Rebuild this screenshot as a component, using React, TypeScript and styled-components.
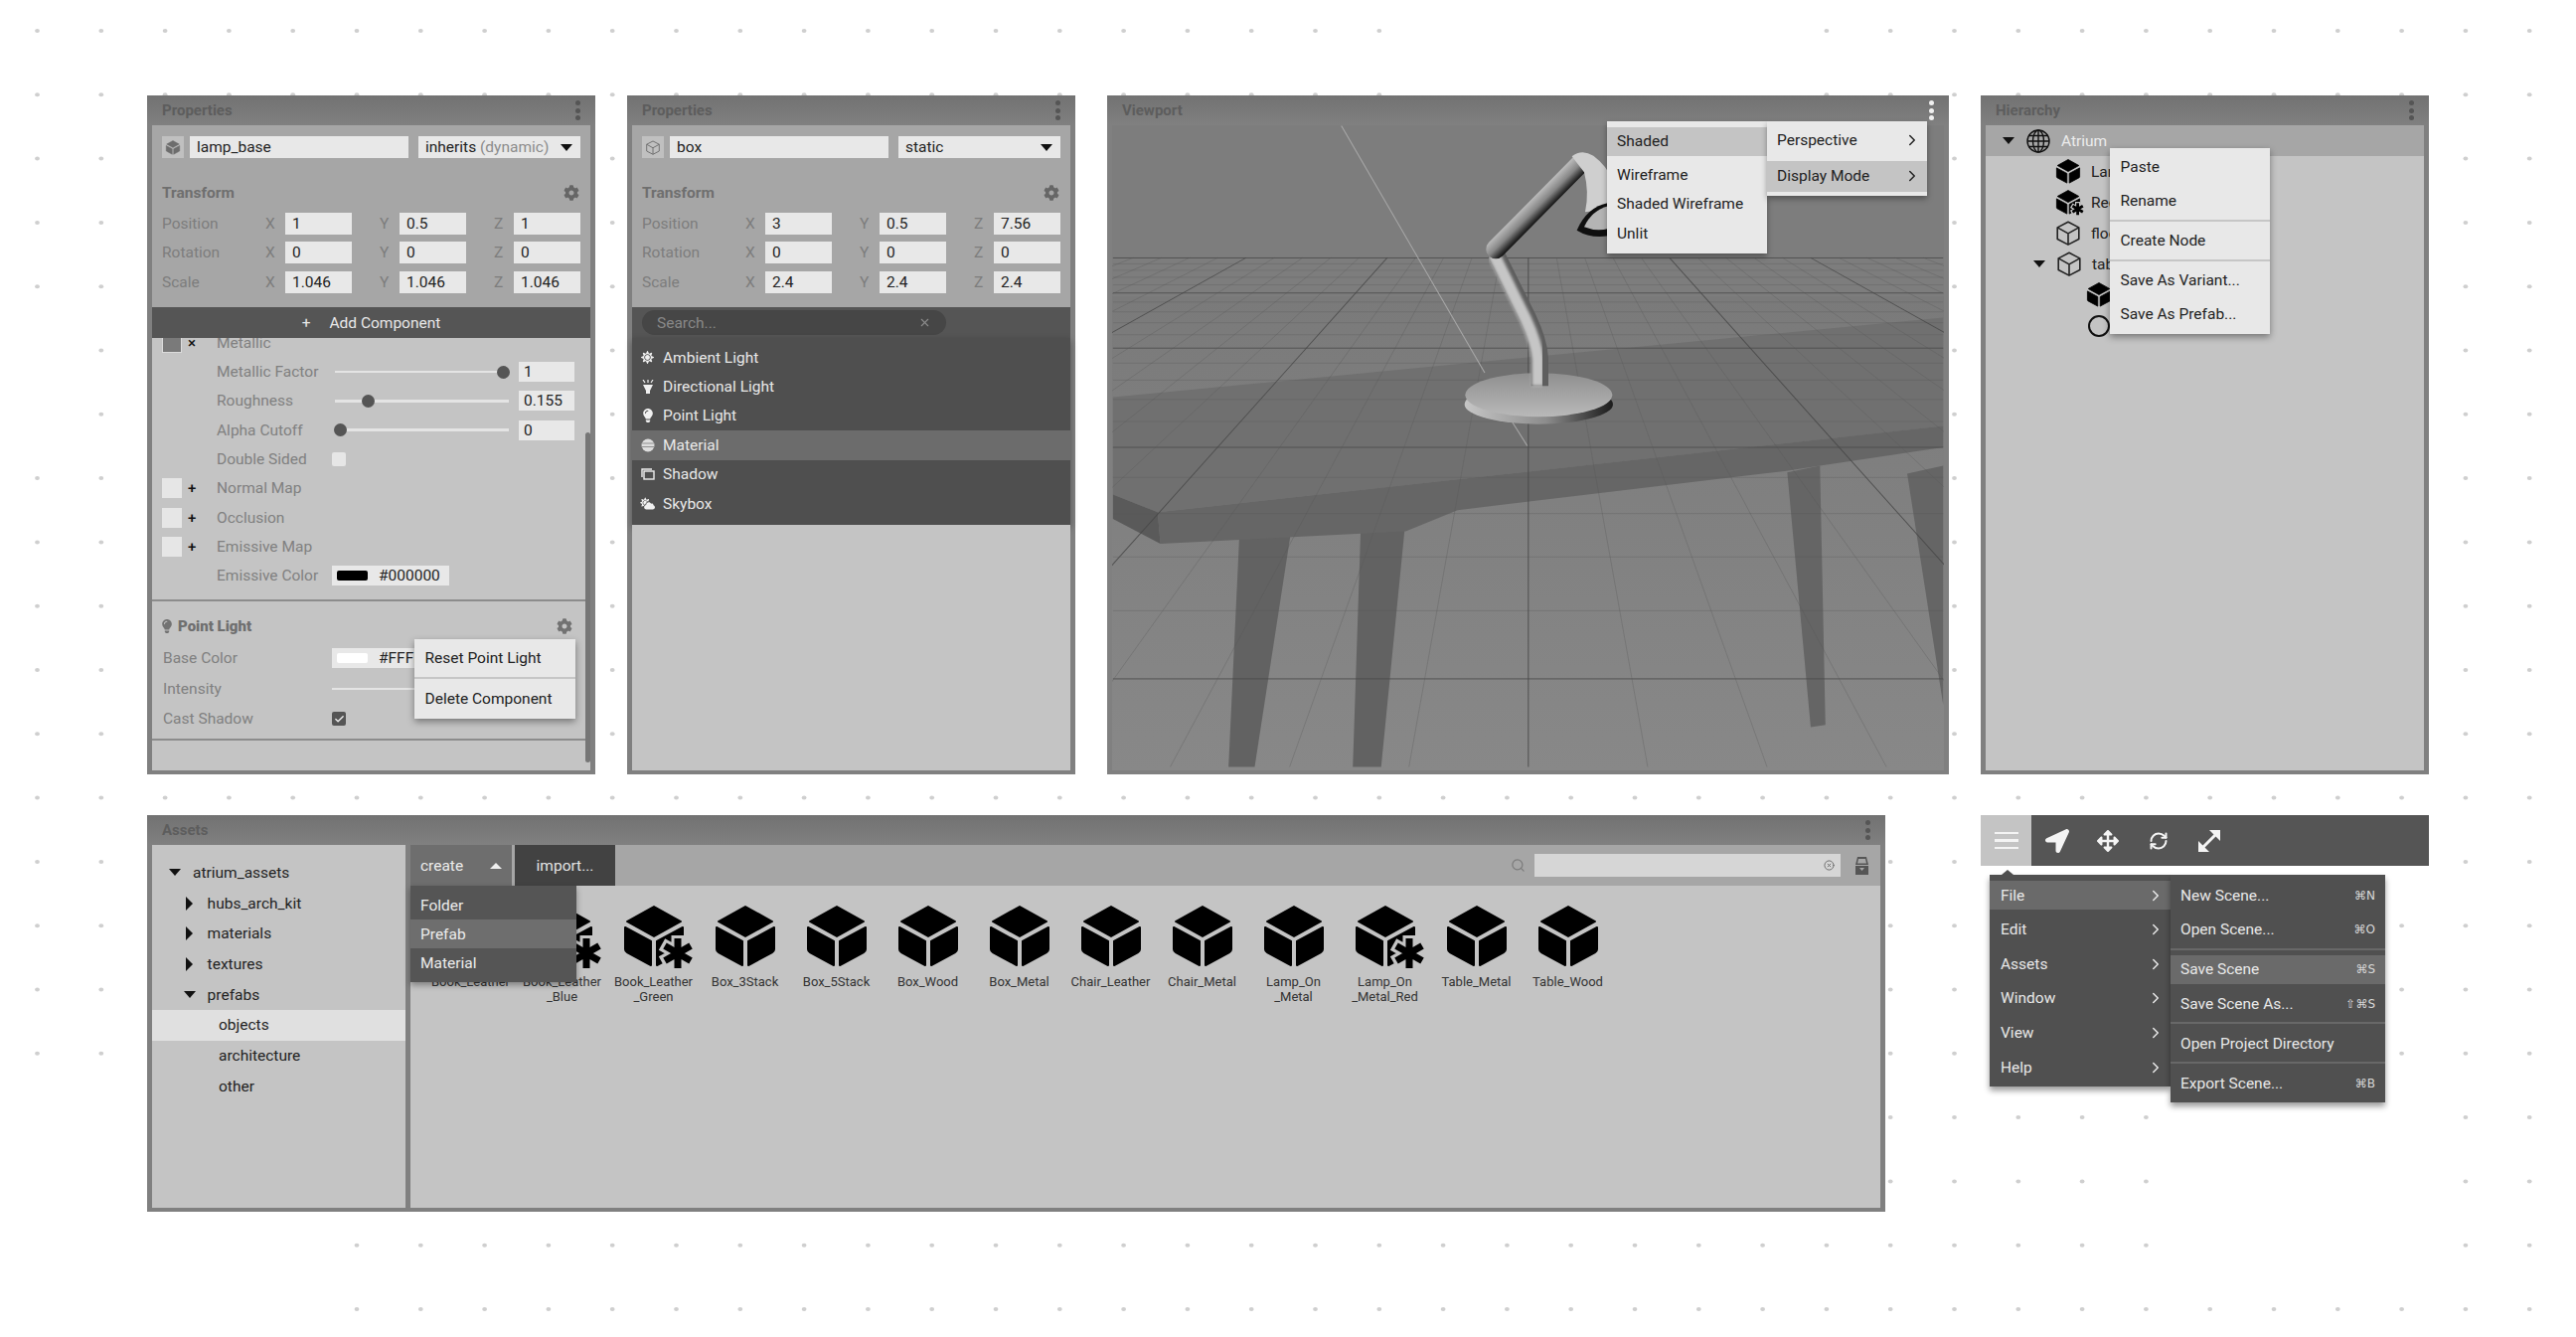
import React from "react";
import styled, { createGlobalStyle } from "styled-components";
import { Check, ChevronRight, RefreshCw, Search, X, XCircle } from "lucide-react";
import { FaArrowsAlt, FaCloudSun, FaCog, FaLightbulb, FaLocationArrow, FaSun } from "react-icons/fa";

const GlobalStyle = createGlobalStyle`
  html, body {
    margin: 0;
    padding: 0;
    background: #fff;
    font-family: Roboto, "Liberation Sans", sans-serif;
  }
  * { box-sizing: border-box; }
`;

const Page = styled.div`
  position: relative;
  width: 2592px;
  height: 1345px;
  overflow: hidden;
  background: #fff;
  padding: 96px 0 0 148px;
`;

const DotLayer = styled.svg`
  position: absolute;
  left: 0;
  top: 0;
`;

const TopRow = styled.div`
  position: relative;
  display: grid;
  grid-template-columns: 451px 451px 847px 451px;
  column-gap: 32px;
  height: 683px;
`;

const BottomRow = styled.div`
  position: relative;
  display: flex;
  gap: 96px;
  margin-top: 41px;
  align-items: flex-start;
`;

const Panel = styled.section<{ $w?: number; $h?: number }>`
  position: relative;
  display: flex;
  flex-direction: column;
  background: #808080;
  padding: 0 5px 4px;
  width: ${(p) => (p.$w ? `${p.$w}px` : "auto")};
  height: ${(p) => (p.$h ? `${p.$h}px` : "auto")};
`;

const PanelHeader = styled.header`
  display: flex;
  align-items: center;
  justify-content: space-between;
  flex: 0 0 30px;
  margin: 0 -5px;
  padding: 0 15.5px 0 15px;
  background: linear-gradient(#727272, #808080);
  font-size: 15px;
  font-weight: 700;
  color: #5d5d5d;
`;

const MoreDots = styled.div<{ $light?: boolean }>`
  display: flex;
  flex-direction: column;
  gap: 2.5px;
  i {
    display: block;
    width: 5px;
    height: 5px;
    border-radius: 50%;
    background: ${(p) => (p.$light ? "#f0f0f0" : "#555")};
  }
`;

const Body = styled.div`
  flex: 1;
  min-height: 0;
  background: #c4c4c4;
  overflow: hidden;
  position: relative;
`;

const TopSection = styled.div`
  height: 183px;
  padding: 11px 10px 0;
  background: #a6a6a6;
`;

const NameRow = styled.div`
  display: flex;
  height: 22px;
`;

const IconBox = styled.div`
  flex: 0 0 22px;
  margin-right: 6px;
  display: flex;
  align-items: center;
  justify-content: center;
  background: #c0c0c0;
  color: #6d6d6d;
`;

const Field = styled.div<{ $w?: number; $h?: number }>`
  display: flex;
  align-items: center;
  width: ${(p) => (p.$w ? `${p.$w}px` : "100%")};
  height: ${(p) => p.$h || 22}px;
  padding-left: 7px;
  background: #e8e8e8;
  font-size: 15.5px;
  color: #222;
  white-space: nowrap;
  flex: none;
`;

const SelectField = styled(Field)`
  margin-left: 10px;
  justify-content: space-between;
  padding-right: 8px;
  span em {
    font-style: normal;
    color: #8c8c8c;
  }
`;

const Caret = styled.i<{ $dir: "down" | "right" | "up"; $color?: string }>`
  display: block;
  width: 0;
  height: 0;
  border-style: solid;
  border-color: transparent;
  ${(p) =>
    p.$dir === "down"
      ? `border-width: 7px 6px 0; border-top-color: ${p.$color || "#111"};`
      : p.$dir === "up"
      ? `border-width: 0 6px 6px; border-bottom-color: ${p.$color || "#111"};`
      : `border-width: 7px 0 7px 7px; border-left-color: ${p.$color || "#111"};`}
`;

const SectionTitle = styled.div`
  display: flex;
  align-items: center;
  justify-content: space-between;
  height: 30px;
  margin-top: 19.5px;
  margin-bottom: 5.5px;
  font-size: 15.5px;
  font-weight: 700;
  color: #6f6f6f;
`;

const GearMark = styled.span<{ $light?: boolean }>`
  display: flex;
  margin-right: 1px;
  color: ${(p) => (p.$light ? "#f2f2f2" : "#666")};
`;

const TransformRow = styled.div`
  display: flex;
  align-items: center;
  height: 22px;
  margin-bottom: 7.33px;
`;

const RowLabel = styled.div`
  flex: 0 0 104px;
  font-size: 15.5px;
  color: #7d7d7d;
`;

const AxisCell = styled.div`
  display: flex;
  align-items: center;
  width: 86.67px;
  margin-right: 28.33px;
  &:last-child {
    margin-right: 0;
  }
`;

const AxisLetter = styled.span`
  flex: 0 0 20px;
  font-size: 15.5px;
  color: #7d7d7d;
`;

const AddBar = styled.div`
  display: flex;
  align-items: center;
  justify-content: center;
  gap: 19px;
  height: 31px;
  background: #555;
  color: #e8e8e8;
  font-size: 15.5px;
`;

const ScrollArea = styled.div`
  height: 435px;
  overflow: hidden;
`;

const MaterialRow = styled.div<{ $first?: boolean }>`
  display: grid;
  grid-template-columns: 65px 116px 1fr;
  align-items: center;
  height: 29.33px;
  margin-top: ${(p) => (p.$first ? "-10px" : "0")};
  font-size: 15.5px;
  color: #808080;
`;

const SwatchSlot = styled.div`
  display: flex;
  align-items: center;
  gap: 6px;
  padding-left: 10px;
  color: #111;
  font-size: 15px;
  font-weight: 500;
`;

const MapSwatch = styled.div<{ $dark?: boolean }>`
  width: 20px;
  height: 20px;
  background: ${(p) => (p.$dark ? "#7a7a7a" : "#e6e6e6")};
  border: ${(p) => (p.$dark ? "1px solid #dcdcdc" : "none")};
`;

const SliderWrap = styled.div`
  display: flex;
  align-items: center;
  margin-left: 3px;
`;

const Track = styled.div`
  position: relative;
  width: 175px;
  height: 2.5px;
  background: #e4e4e4;
`;

const Thumb = styled.i<{ $pos: number }>`
  position: absolute;
  left: ${(p) => p.$pos}%;
  top: -5px;
  width: 13px;
  height: 13px;
  margin-left: -6.5px;
  border-radius: 50%;
  background: #555;
`;

const ValueField = styled(Field)`
  margin-left: 10px;
  padding-left: 5px;
`;

const Checkbox = styled.div<{ $on?: boolean }>`
  display: flex;
  align-items: center;
  justify-content: center;
  width: 14px;
  height: 14px;
  border-radius: 2px;
  background: ${(p) => (p.$on ? "#555" : "#e6e6e6")};
  color: #eee;
`;

const ColorField = styled.div`
  display: flex;
  align-items: center;
  gap: 11px;
  width: 118px;
  height: 20px;
  padding-left: 5px;
  background: #e8e8e8;
  font-size: 15.5px;
  color: #222;
`;

const ColorChip = styled.i<{ $c: string }>`
  width: 31px;
  height: 10px;
  border-radius: 2px;
  background: ${(p) => p.$c};
`;

const LightSection = styled.div`
  margin-top: 9.5px;
  border-top: 2px solid #8c8c8c;
  border-bottom: 2px solid #8c8c8c;
  padding: 8px 0 4px;
`;

const LightTitle = styled.div`
  display: flex;
  align-items: center;
  height: 33.75px;
  padding: 0 17px 0 8px;
  gap: 4px;
  font-size: 15px;
  font-weight: 700;
  color: #6f6f6f;
  svg {
    color: #727272;
  }
  b {
    flex: 1;
  }
`;

const LightRow = styled.div`
  display: grid;
  grid-template-columns: 170px 1fr;
  align-items: center;
  height: 30.5px;
  padding-left: 11px;
  font-size: 15.5px;
  color: #808080;
`;

const WideTrack = styled.div`
  width: 180px;
  height: 2.5px;
  background: #e4e4e4;
`;

const ScrollThumb = styled.div`
  position: absolute;
  left: 441px;
  top: 339px;
  width: 5px;
  height: 332px;
  border-radius: 3px;
  background: #767676;
`;

const PopMenu = styled.div<{ $l: number; $t: number; $w: number; $pt?: number; $pb?: number }>`
  position: absolute;
  left: ${(p) => p.$l}px;
  top: ${(p) => p.$t}px;
  width: ${(p) => p.$w}px;
  padding: ${(p) => p.$pt || 0}px 0 ${(p) => p.$pb || 0}px;
  background: #e8e8e8;
  box-shadow: 0 3px 7px rgba(0, 0, 0, 0.4);
  font-size: 15.5px;
  color: #222;
  z-index: 3;
`;

const PopItem = styled.div<{ $h?: number }>`
  display: flex;
  align-items: center;
  height: ${(p) => p.$h || 34}px;
  padding-left: 10.5px;
  white-space: nowrap;
`;

const PopRule = styled.hr<{ $gap?: number }>`
  margin: ${(p) => p.$gap ?? 2}px 0;
  border: 0;
  height: 2px;
  background: #c6c6c6;
`;

const SearchBar = styled.div`
  display: flex;
  align-items: center;
  height: 31px;
  padding: 0 0 0 10px;
  background: #555;
`;

const SearchPill = styled.div`
  display: flex;
  align-items: center;
  justify-content: space-between;
  width: 306px;
  height: 25px;
  padding: 0 15px;
  border-radius: 13px;
  background: #464646;
  color: #888;
  font-size: 15.5px;
`;

const ComponentList = styled.div`
  height: 188px;
  padding-top: 5px;
  background: #4f4f4f;
  box-shadow: 0 3px 7px rgba(0, 0, 0, 0.35);
  position: relative;
`;

const ComponentRow = styled.div<{ $active?: boolean }>`
  display: flex;
  align-items: center;
  height: 29.4px;
  padding-left: 8px;
  gap: 8px;
  background: ${(p) => (p.$active ? "#6c6c6c" : "transparent")};
  color: #e8e8e8;
  font-size: 15.5px;
`;

const ComponentIcon = styled.span`
  display: flex;
  justify-content: center;
  width: 15px;
`;

const Scene = styled.svg`
  display: block;
  width: 100%;
  height: 100%;
`;

const MenuColumn = styled.div<{ $w: number; $h: number }>`
  width: ${(p) => p.$w}px;
  height: ${(p) => p.$h}px;
  padding-top: 5.5px;
  background: #e8e8e8;
  box-shadow: 0 3px 6px rgba(0, 0, 0, 0.35);
`;

const ViewMenu = styled.div`
  position: absolute;
  left: 503px;
  top: 26px;
  display: flex;
  align-items: flex-start;
  z-index: 3;
`;

const ViewItem = styled.div<{ $active?: boolean; $h?: number; $mt?: number; $mb?: number }>`
  display: flex;
  align-items: center;
  justify-content: space-between;
  height: ${(p) => p.$h || 29.5}px;
  margin-top: ${(p) => p.$mt || 0}px;
  margin-bottom: ${(p) => p.$mb || 0}px;
  padding: 0 6px 0 10px;
  background: ${(p) => (p.$active ? "#c4c4c4" : "transparent")};
  font-size: 15.5px;
  color: #222;
`;

const TreeBand = styled.div<{ $pad: number; $band?: boolean; $h?: number; $gap?: number }>`
  display: flex;
  align-items: center;
  height: ${(p) => p.$h || 31}px;
  padding-left: ${(p) => p.$pad}px;
  gap: ${(p) => p.$gap || 11}px;
  background: ${(p) => (p.$band ? "#a6a6a6" : "transparent")};
  color: ${(p) => (p.$band ? "#ececec" : "#222")};
  font-size: 15.5px;
  white-space: nowrap;
`;

const CaretSlot = styled.span`
  display: flex;
  align-items: center;
  justify-content: center;
  flex: 0 0 24px;
  margin-right: -5px;
`;

const RingIcon = styled.i`
  width: 22px;
  height: 22px;
  margin-left: 1px;
  border: 2px solid #111;
  border-radius: 50%;
`;

const AssetsBody = styled.div`
  flex: 1;
  display: flex;
  gap: 5px;
  min-height: 0;
`;

const TreePane = styled.div`
  flex: 0 0 255px;
  padding-top: 12.6px;
  background: #c4c4c4;
`;

const AssetRow = styled.div<{ $pad: number; $active?: boolean }>`
  display: flex;
  align-items: center;
  gap: 6px;
  height: 30.7px;
  padding-left: ${(p) => p.$pad}px;
  background: ${(p) => (p.$active ? "#e0e0e0" : "transparent")};
  font-size: 15.5px;
  color: #222;
`;

const RowName = styled.span`
  margin-left: 5px;
`;

const MainPane = styled.div`
  position: relative;
  flex: 1;
  background: #c4c4c4;
`;

const AssetToolbar = styled.div`
  display: flex;
  align-items: center;
  height: 41px;
  background: #a6a6a6;
`;

const CreateButton = styled.div`
  display: flex;
  align-items: center;
  justify-content: space-between;
  width: 102px;
  height: 100%;
  padding: 0 10px;
  background: #6e6e6e;
  color: #ececec;
  font-size: 15.5px;
`;

const ImportButton = styled.div`
  display: flex;
  align-items: center;
  justify-content: center;
  width: 101px;
  height: 100%;
  margin-left: 3px;
  background: #424242;
  color: #e4e4e4;
  font-size: 15.5px;
`;

const SearchGroup = styled.div`
  display: flex;
  align-items: center;
  margin-left: auto;
  padding-right: 11px;
  color: #7c7c7c;
`;

const AssetSearch = styled.div`
  display: flex;
  align-items: center;
  justify-content: flex-end;
  width: 308px;
  height: 23px;
  margin: 0 14px 0 9px;
  padding-right: 6px;
  background: #d6d6d6;
  color: #666;
`;

const AssetGrid = styled.div`
  display: flex;
  padding: 20px 0 0 14.5px;
`;

const AssetItem = styled.div`
  display: flex;
  flex-direction: column;
  align-items: center;
  width: 92px;
`;

const AssetLabel = styled.div`
  margin-top: 7px;
  font-size: 13px;
  line-height: 15px;
  color: #333;
  text-align: center;
  white-space: pre-line;
`;

const CreateMenu = styled.div`
  position: absolute;
  left: 0;
  top: 41px;
  width: 167px;
  height: 97px;
  padding-top: 5px;
  background: #555;
  box-shadow: 0 3px 6px rgba(0, 0, 0, 0.35);
  z-index: 2;
`;

const CreateItem = styled.div<{ $active?: boolean }>`
  display: flex;
  align-items: center;
  height: 29px;
  padding-left: 10px;
  background: ${(p) => (p.$active ? "#6e6e6e" : "transparent")};
  color: #ececec;
  font-size: 15.5px;
`;

const ToolColumn = styled.div`
  position: relative;
  width: 451px;
`;

const ToolBar = styled.div`
  display: flex;
  height: 51px;
  background: #555;
`;

const ToolButton = styled.div<{ $active?: boolean }>`
  display: flex;
  align-items: center;
  justify-content: center;
  width: 51px;
  background: ${(p) => (p.$active ? "#c4c4c4" : "transparent")};
  color: #f4f4f4;
`;

const Burger = styled.div`
  display: flex;
  flex-direction: column;
  gap: 5px;
  i {
    display: block;
    width: 24px;
    height: 2.5px;
    background: #f4f4f4;
  }
`;

const MenuStack = styled.div`
  position: absolute;
  left: 9px;
  top: 60px;
  display: flex;
  align-items: flex-start;
  z-index: 2;
  &::before {
    content: "";
    position: absolute;
    left: 12px;
    top: -5px;
    border-style: solid;
    border-width: 0 6px 5px;
    border-color: transparent transparent #505050;
  }
`;

const DarkMenu = styled.div<{ $w: number }>`
  width: ${(p) => p.$w}px;
  padding: 6px 0 5px;
  background: #505050;
  box-shadow: 0 4px 6px rgba(0, 0, 0, 0.4);
  color: #e8e8e8;
  font-size: 15.5px;
`;

const DarkItem = styled.div<{ $active?: boolean; $gap?: number }>`
  display: flex;
  align-items: center;
  justify-content: space-between;
  height: 29px;
  margin-bottom: ${(p) => p.$gap ?? 5.67}px;
  padding: 0 6px 0 11px;
  background: ${(p) => (p.$active ? "#6a6a6a" : "transparent")};
  &:last-child {
    margin-bottom: 0;
  }
`;

const SubItem = styled(DarkItem)`
  padding: 0 10px;
`;

const Shortcut = styled.span`
  font-family: "DejaVu Sans", Roboto, sans-serif;
  font-size: 12px;
  color: #d8d8d8;
`;

const DarkRule = styled.hr`
  margin: 0 0 5px;
  border: 0;
  height: 2px;
  background: #686868;
`;

// cube glyph used all over the editor, solid or outlined, with optional "variant" star
const Cube = ({
  w = 60,
  h = 62,
  outline = false,
  star = false,
  fill = "#000",
}: {
  w?: number;
  h?: number;
  outline?: boolean;
  star?: boolean;
  fill?: string;
}) => (
  <svg width={w} height={h} viewBox="0 0 60 62" style={{ overflow: "visible", flex: "none" }}>
    {outline ? (
      <g fill="none" stroke="currentColor" strokeWidth={4} strokeLinejoin="round">
        <path d="M30 3 L57 17 V46 L30 60 L3 46 V17 Z" />
        <path d="M3 17 L30 32 L57 17 M30 32 V60" />
      </g>
    ) : (
      <g fill={fill} stroke={fill} strokeWidth={2} strokeLinejoin="round">
        <path d="M30 1 L57 16 L30 31 L3 16 Z" />
        <path d="M1 22 L27 36 V60 L3 47 Q1 46 1 44 Z" />
        <path d="M59 22 L33 36 V60 L57 47 Q59 46 59 44 Z" />
      </g>
    )}
    {star && (
      <g strokeLinecap="butt">
        <g stroke="#c4c4c4" strokeWidth={13}>
          <path d="M54 30 V66 M38 39 L70 57 M38 57 L70 39" />
        </g>
        <g stroke="#000" strokeWidth={7}>
          <path d="M54 33 V63 M41 40.5 L67 55.5 M41 55.5 L67 40.5" />
        </g>
      </g>
    )}
  </svg>
);

const Gear = ({ light }: { light?: boolean }) => (
  <GearMark $light={light}>
    <FaCog size={16} />
  </GearMark>
);

const GlobeIcon = () => (
  <svg width="24" height="24" viewBox="0 0 24 24" fill="none" stroke="#111" strokeWidth="1.4">
    <circle cx="12" cy="12" r="11" />
    <ellipse cx="12" cy="12" rx="5.5" ry="11" />
    <path d="M12 1 V23 M1 12 H23 M2.6 6.5 H21.4 M2.6 17.5 H21.4" />
  </svg>
);

const ArchiveIcon = () => (
  <svg width="15" height="20" viewBox="0 0 15 20" fill="#555">
    <path d="M3 1 H12 L14 9 H1 Z M4 3 L3 7.5 H12 L11 3 Z" fillRule="evenodd" />
    <path d="M1 10 H14 V19 H1 Z M5 12 L7.5 15 L10 12 Z" fillRule="evenodd" />
  </svg>
);

const ExpandIcon = () => (
  <svg width="26" height="26" viewBox="0 0 26 26" fill="none" stroke="#f4f4f4" strokeWidth="3">
    <path d="M4 22 L22 4" />
    <path d="M13 2 H24 V13 Z" fill="#f4f4f4" stroke="none" />
    <path d="M2 13 V24 H13 Z" fill="#f4f4f4" stroke="none" />
  </svg>
);

const DirectionalIcon = () => (
  <svg width="12" height="15" viewBox="0 0 12 15" fill="#f0f0f0">
    <path d="M1 5 H11 L8 11 V14 H4 V11 Z" />
    <path d="M1 0 L3 3 M6 0 V3 M11 0 L9 3" stroke="#f0f0f0" strokeWidth="1.2" />
  </svg>
);

const MaterialIcon = () => (
  <svg width="14" height="14" viewBox="0 0 14 14">
    <circle cx="7" cy="7" r="6.5" fill="#ddd" />
    <path d="M1 5 H13 M0.8 8.5 H13.2" stroke="#8f8f8f" strokeWidth="1" />
  </svg>
);

const ShadowIcon = () => (
  <svg width="14" height="12" viewBox="0 0 14 12" fill="none" stroke="#eee" strokeWidth="1.4">
    <path d="M1 9 V1 H11" />
    <rect x="3" y="3" width="10" height="8" />
  </svg>
);

const DOT_COLS = 40;
const DOT_ROWS = 21;

// the dot grid has a few holes in it, same ones as in the mockup
const dotVisible = (c: number, r: number) => {
  if (r <= 1 && c >= 22 && c <= 27) return false;
  if (c === 0 && (r === 5 || r === 6)) return false;
  if (r === 17 || r === 18) return c >= 29 && (c <= 33 || c >= 38);
  if (r === 19) return c >= 5 && (c <= 33 || c >= 38);
  if (r === 20) return c >= 5;
  return true;
};

const DotGrid = () => {
  const dots: React.ReactNode[] = [];
  for (let r = 0; r < DOT_ROWS; r++) {
    for (let c = 0; c < DOT_COLS; c++) {
      if (dotVisible(c, r)) {
        dots.push(<ellipse key={`${c}-${r}`} cx={37.5 + c * 64.3} cy={31 + r * 64.3} rx={2.4} ry={2} fill="#cfcfcf" />);
      }
    }
  }
  return (
    <DotLayer width="2592" height="1345">
      {dots}
    </DotLayer>
  );
};

const gridX = (a: number, y: number) => 780 + a * (y - 24);

const GridLines = () => {
  const lines: React.ReactNode[] = [];
  for (let n = 0; n <= 25; n++) {
    const y = 24 + 1 / (0.000255 + n * 0.000102);
    if (y > 1530) continue;
    const major = n % 5 === 0;
    lines.push(
      <line key={`h${n}`} x1="18" x2="1541" y1={y} y2={y} stroke={major ? "#484848" : "#565656"} strokeOpacity={major ? 0.9 : 0.55} strokeWidth={major ? 1.8 : 1.1} />
    );
  }
  for (let i = -60; i <= 60; i++) {
    const a = i * 0.1454;
    const major = i % 5 === 0;
    lines.push(
      <line key={`v${i}`} x1={gridX(a, 380)} y1="380" x2={gridX(a, 1530)} y2="1530" stroke={major ? "#484848" : "#565656"} strokeOpacity={major ? 0.85 : 0.5} strokeWidth={major ? 1.9 : 1.3} />
    );
  }
  return <g>{lines}</g>;
};

const Lamp = () => (
  <g transform="translate(1440 130) scale(0.3333)">
    <ellipse cx="325" cy="830" rx="224" ry="60" fill="url(#baseSide)" />
    <ellipse cx="325" cy="802" rx="222" ry="66" fill="url(#baseTop)" />
    <path d="M328 775 V690 Q325 640 292 570 L195 375" fill="none" stroke="#5e5e5e" strokeWidth="52" />
    <path d="M322 775 V692 Q318 645 286 575 L189 378" fill="none" stroke="#c6c6c6" strokeWidth="36" filter="url(#soft)" />
    <path d="M195 362 L452 102" fill="none" stroke="url(#armUp)" strokeWidth="58" strokeLinecap="round" />
    <path d="M425 82 Q455 58 490 80 Q530 110 545 150 V240 L465 250 Q478 190 462 130 Z" fill="#cfcfcf" />
    <path d="M535 222 Q470 235 440 305 Q480 330 535 322 Z" fill="#0f0f0f" />
    <path d="M535 232 Q485 245 462 295 Q500 310 535 300 Z" fill="#b4b4b4" />
  </g>
);

const ViewportScene = () => (
  <Scene viewBox="1119 126 837 649" preserveAspectRatio="none">
    <defs>
      <linearGradient id="ground" x1="0" y1="0" x2="0" y2="1">
        <stop offset="0" stopColor="#7a7a7a" />
        <stop offset="1" stopColor="#888" />
      </linearGradient>
      <linearGradient id="baseSide" x1="0" y1="0" x2="1" y2="0">
        <stop offset="0" stopColor="#c6c6c6" />
        <stop offset="0.55" stopColor="#8c8c8c" />
        <stop offset="0.9" stopColor="#333" />
        <stop offset="1" stopColor="#1c1c1c" />
      </linearGradient>
      <linearGradient id="baseTop" x1="0" y1="0" x2="0" y2="1">
        <stop offset="0" stopColor="#8f8f8f" />
        <stop offset="1" stopColor="#b9b9b9" />
      </linearGradient>
      <linearGradient id="armUp" gradientUnits="userSpaceOnUse" x1="304" y1="210" x2="346" y2="252">
        <stop offset="0" stopColor="#bcbcbc" />
        <stop offset="0.5" stopColor="#868686" />
        <stop offset="0.85" stopColor="#303030" />
        <stop offset="1" stopColor="#111" />
      </linearGradient>
      <filter id="soft">
        <feGaussianBlur stdDeviation="5" />
      </filter>
    </defs>
    <rect x="1119" y="126" width="837" height="649" fill="#7d7d7d" />
    <rect x="1119" y="298" width="837" height="477" fill="url(#ground)" />
    <g transform="translate(1110 90) scale(0.5485 0.4454)">
      <path d="M250 1005 L345 995 L278 1530 H230 Z" fill="#626262" />
      <path d="M473 975 L553 995 L510 1530 H458 Z" fill="#626262" />
      <path d="M1255 865 L1315 850 L1325 1435 L1298 1440 Z" fill="#656565" />
      <path d="M1475 868 L1541 850 V1390 Z" fill="#656565" />
      <path d="M18 695 L1541 515 V760 L100 955 L18 915 Z" fill="#707070" />
      <path d="M100 955 L1541 760 V808 L1315 850 L1250 862 L650 950 L555 998 L105 1026 Z" fill="#666" />
      <path d="M18 915 L100 955 L105 1026 L18 970 Z" fill="#5a5a5a" />
      <GridLines />
      <path d="M437 82 L700 640 M750 750 L778 805" stroke="#a6a6a6" strokeWidth="2" fill="none" />
    </g>
    <Lamp />
  </Scene>
);

const inspector = {
  first: { position: ["1", "0.5", "1"], rotation: ["0", "0", "0"], scale: ["1.046", "1.046", "1.046"] },
  second: { position: ["3", "0.5", "7.56"], rotation: ["0", "0", "0"], scale: ["2.4", "2.4", "2.4"] },
};

const Axis = ({ letter, value }: { letter: string; value: string }) => (
  <AxisCell>
    <AxisLetter>{letter}</AxisLetter>
    <Field $w={66.67}>{value}</Field>
  </AxisCell>
);

const TransformLine = ({ label, values }: { label: string; values: string[] }) => (
  <TransformRow>
    <RowLabel>{label}</RowLabel>
    <Axis letter="X" value={values[0]} />
    <Axis letter="Y" value={values[1]} />
    <Axis letter="Z" value={values[2]} />
  </TransformRow>
);

const Inspector = ({ name, mode, icon, data }: { name: string; mode: React.ReactNode; icon: React.ReactNode; data: typeof inspector.first }) => (
  <TopSection>
    <NameRow>
      <IconBox>{icon}</IconBox>
      <Field $w={220}>{name}</Field>
      <SelectField $w={163}>
        <span>{mode}</span>
        <Caret $dir="down" />
      </SelectField>
    </NameRow>
    <SectionTitle>
      Transform
      <Gear />
    </SectionTitle>
    <TransformLine label="Position" values={data.position} />
    <TransformLine label="Rotation" values={data.rotation} />
    <TransformLine label="Scale" values={data.scale} />
  </TopSection>
);

const Slider = ({ pos, value }: { pos: number; value: string }) => (
  <SliderWrap>
    <Track>
      <Thumb $pos={pos} />
    </Track>
    <ValueField $w={56} $h={20}>
      {value}
    </ValueField>
  </SliderWrap>
);

const MapRow = ({ label }: { label: string }) => (
  <MaterialRow>
    <SwatchSlot>
      <MapSwatch />+
    </SwatchSlot>
    <span>{label}</span>
  </MaterialRow>
);

const PanelTitle = ({ title, light }: { title: string; light?: boolean }) => (
  <PanelHeader>
    {title}
    <MoreDots $light={light}>
      <i />
      <i />
      <i />
    </MoreDots>
  </PanelHeader>
);

const components = [
  { label: "Ambient Light", icon: <FaSun size={13} color="#f0f0f0" /> },
  { label: "Directional Light", icon: <DirectionalIcon /> },
  { label: "Point Light", icon: <FaLightbulb size={14} color="#f0f0f0" /> },
  { label: "Material", icon: <MaterialIcon />, active: true },
  { label: "Shadow", icon: <ShadowIcon /> },
  { label: "Skybox", icon: <FaCloudSun size={15} color="#f0f0f0" /> },
];

const assets = [
  { label: "Book_Leather", star: true },
  { label: "Book_Leather\n_Blue", star: true },
  { label: "Book_Leather\n_Green", star: true },
  { label: "Box_3Stack" },
  { label: "Box_5Stack" },
  { label: "Box_Wood" },
  { label: "Box_Metal" },
  { label: "Chair_Leather" },
  { label: "Chair_Metal" },
  { label: "Lamp_On\n_Metal" },
  { label: "Lamp_On\n_Metal_Red", star: true },
  { label: "Table_Metal" },
  { label: "Table_Wood" },
];

const mainMenu = ["File", "Edit", "Assets", "Window", "View", "Help"];

export default function App() {
  return (
    <Page>
      <GlobalStyle />
      <DotGrid />
      <TopRow>
        <Panel>
          <PanelTitle title="Properties" />
          <Inspector
            name="lamp_base"
            mode={
              <>
                inherits <em>(dynamic)</em>
              </>
            }
            icon={<Cube w={14} h={15} fill="#6d6d6d" />}
            data={inspector.first}
          />
          <AddBar>
            <span>+</span>
            <span>Add Component</span>
          </AddBar>
          <Body>
            <ScrollArea>
              <MaterialRow $first>
                <SwatchSlot>
                  <MapSwatch $dark />×
                </SwatchSlot>
                <span>Metallic</span>
              </MaterialRow>
              <MaterialRow>
                <span />
                <span>Metallic Factor</span>
                <Slider pos={96.6} value="1" />
              </MaterialRow>
              <MaterialRow>
                <span />
                <span>Roughness</span>
                <Slider pos={18.9} value="0.155" />
              </MaterialRow>
              <MaterialRow>
                <span />
                <span>Alpha Cutoff</span>
                <Slider pos={3.4} value="0" />
              </MaterialRow>
              <MaterialRow>
                <span />
                <span>Double Sided</span>
                <Checkbox />
              </MaterialRow>
              <MapRow label="Normal Map" />
              <MapRow label="Occlusion" />
              <MapRow label="Emissive Map" />
              <MaterialRow>
                <span />
                <span>Emissive Color</span>
                <ColorField>
                  <ColorChip $c="#000" />
                  #000000
                </ColorField>
              </MaterialRow>
              <LightSection>
                <LightTitle>
                  <FaLightbulb size={14} />
                  <b>Point Light</b>
                  <Gear light />
                </LightTitle>
                <LightRow>
                  <span>Base Color</span>
                  <ColorField>
                    <ColorChip $c="#fff" />
                    #FFFFFF
                  </ColorField>
                </LightRow>
                <LightRow>
                  <span>Intensity</span>
                  <WideTrack />
                </LightRow>
                <LightRow>
                  <span>Cast Shadow</span>
                  <Checkbox $on>
                    <Check size={11} strokeWidth={3} />
                  </Checkbox>
                </LightRow>
              </LightSection>
            </ScrollArea>
          </Body>
          <ScrollThumb />
          <PopMenu $l={269} $t={547} $w={162}>
            <PopItem $h={38}>Reset Point Light</PopItem>
            <PopRule $gap={0} />
            <PopItem $h={40}>Delete Component</PopItem>
          </PopMenu>
        </Panel>

        <Panel>
          <PanelTitle title="Properties" />
          <Inspector name="box" mode="static" icon={<Cube w={14} h={15} outline />} data={inspector.second} />
          <SearchBar>
            <SearchPill>
              Search...
              <X size={13} color="#8c8c8c" />
            </SearchPill>
          </SearchBar>
          <ComponentList>
            {components.map((c) => (
              <ComponentRow key={c.label} $active={c.active}>
                <ComponentIcon>{c.icon}</ComponentIcon>
                {c.label}
              </ComponentRow>
            ))}
          </ComponentList>
          <Body />
        </Panel>

        <Panel>
          <PanelTitle title="Viewport" light />
          <Body>
            <ViewportScene />
          </Body>
          <ViewMenu>
            <MenuColumn $w={161} $h={133}>
              <ViewItem $active>Shaded</ViewItem>
              <ViewItem $mt={4}>Wireframe</ViewItem>
              <ViewItem>Shaded Wireframe</ViewItem>
              <ViewItem>Unlit</ViewItem>
            </MenuColumn>
            <MenuColumn $w={161} $h={75}>
              <ViewItem $h={26} $mb={8}>
                Perspective
                <ChevronRight size={18} />
              </ViewItem>
              <ViewItem $active $h={31}>
                Display Mode
                <ChevronRight size={18} />
              </ViewItem>
            </MenuColumn>
          </ViewMenu>
        </Panel>

        <Panel>
          <PanelTitle title="Hierarchy" />
          <Body>
            <TreeBand $pad={11} $band $h={31} $gap={11}>
              <CaretSlot>
                <Caret $dir="down" />
              </CaretSlot>
              <GlobeIcon />
              Atrium
            </TreeBand>
            <TreeBand $pad={71}>
              <Cube w={24} h={25} />
              Lamp_On
            </TreeBand>
            <TreeBand $pad={71}>
              <Cube w={24} h={25} star />
              Red_Book
            </TreeBand>
            <TreeBand $pad={71}>
              <Cube w={24} h={25} outline />
              floor
            </TreeBand>
            <TreeBand $pad={42} $gap={11}>
              <CaretSlot>
                <Caret $dir="down" />
              </CaretSlot>
              <Cube w={24} h={25} outline />
              table
            </TreeBand>
            <TreeBand $pad={102}>
              <Cube w={24} h={25} />
              top
            </TreeBand>
            <TreeBand $pad={102}>
              <RingIcon />
              legs
            </TreeBand>
          </Body>
          <PopMenu $l={130} $t={53} $w={161} $pt={2} $pb={3}>
            <PopItem>Paste</PopItem>
            <PopItem>Rename</PopItem>
            <PopRule />
            <PopItem>Create Node</PopItem>
            <PopRule />
            <PopItem>Save As Variant...</PopItem>
            <PopItem>Save As Prefab...</PopItem>
          </PopMenu>
        </Panel>
      </TopRow>

      <BottomRow>
        <Panel $w={1749} $h={399}>
          <PanelTitle title="Assets" />
          <AssetsBody>
            <TreePane>
              <AssetRow $pad={11}>
                <CaretSlot>
                  <Caret $dir="down" />
                </CaretSlot>
                <RowName>atrium_assets</RowName>
              </AssetRow>
              {["hubs_arch_kit", "materials", "textures"].map((n) => (
                <AssetRow key={n} $pad={25.6}>
                  <CaretSlot>
                    <Caret $dir="right" />
                  </CaretSlot>
                  <RowName>{n}</RowName>
                </AssetRow>
              ))}
              <AssetRow $pad={25.6}>
                <CaretSlot>
                  <Caret $dir="down" />
                </CaretSlot>
                <RowName>prefabs</RowName>
              </AssetRow>
              <AssetRow $pad={67} $active>
                objects
              </AssetRow>
              <AssetRow $pad={67}>architecture</AssetRow>
              <AssetRow $pad={67}>other</AssetRow>
            </TreePane>
            <MainPane>
              <AssetToolbar>
                <CreateButton>
                  create
                  <Caret $dir="up" $color="#efefef" />
                </CreateButton>
                <ImportButton>import...</ImportButton>
                <SearchGroup>
                  <Search size={15} />
                  <AssetSearch>
                    <XCircle size={11} />
                  </AssetSearch>
                  <ArchiveIcon />
                </SearchGroup>
              </AssetToolbar>
              <AssetGrid>
                {assets.map((a) => (
                  <AssetItem key={a.label}>
                    <Cube star={a.star} />
                    <AssetLabel>{a.label}</AssetLabel>
                  </AssetItem>
                ))}
              </AssetGrid>
              <CreateMenu>
                <CreateItem>Folder</CreateItem>
                <CreateItem $active>Prefab</CreateItem>
                <CreateItem>Material</CreateItem>
              </CreateMenu>
            </MainPane>
          </AssetsBody>
        </Panel>

        <ToolColumn>
          <ToolBar>
            <ToolButton $active>
              <Burger>
                <i />
                <i />
                <i />
              </Burger>
            </ToolButton>
            <ToolButton>
              <FaLocationArrow size={24} />
            </ToolButton>
            <ToolButton>
              <FaArrowsAlt size={22} />
            </ToolButton>
            <ToolButton>
              <RefreshCw size={20} strokeWidth={2.4} />
            </ToolButton>
            <ToolButton>
              <ExpandIcon />
            </ToolButton>
          </ToolBar>
          <MenuStack>
            <DarkMenu $w={182}>
              {mainMenu.map((m) => (
                <DarkItem key={m} $active={m === "File"}>
                  {m}
                  <ChevronRight size={18} />
                </DarkItem>
              ))}
            </DarkMenu>
            <DarkMenu $w={216}>
              <SubItem>
                New Scene...
                <Shortcut>⌘N</Shortcut>
              </SubItem>
              <SubItem $gap={4}>
                Open Scene...
                <Shortcut>⌘O</Shortcut>
              </SubItem>
              <DarkRule />
              <SubItem $active>
                Save Scene
                <Shortcut>⌘S</Shortcut>
              </SubItem>
              <SubItem $gap={4}>
                Save Scene As...
                <Shortcut>⇧⌘S</Shortcut>
              </SubItem>
              <DarkRule />
              <SubItem $gap={4}>Open Project Directory</SubItem>
              <DarkRule />
              <SubItem $gap={0}>
                Export Scene...
                <Shortcut>⌘B</Shortcut>
              </SubItem>
            </DarkMenu>
          </MenuStack>
        </ToolColumn>
      </BottomRow>
    </Page>
  );
}
